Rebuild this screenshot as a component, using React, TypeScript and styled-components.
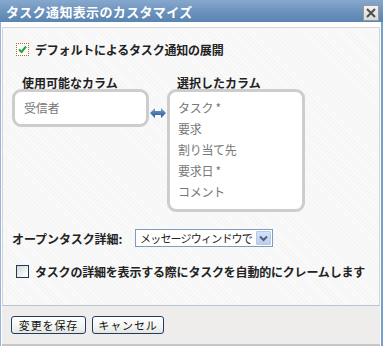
import React from 'react';
import styled, { createGlobalStyle } from 'styled-components';

const GlobalStyle = createGlobalStyle`
    html, body {
        margin: 0;
        padding: 0;
        background: #ffffff;
    }
    body {
        font-family: "Noto Sans CJK JP", "Liberation Sans", sans-serif;
        font-size: 12px;
        color: #222;
    }
`;

const Window = styled.div`
    width: 383px;
    height: 346px;
    display: flex;
    flex-direction: column;
    background: #ffffff;
    overflow: hidden;
`;

const TitleBar = styled.div`
    height: 22px;
    flex: none;
    display: flex;
    align-items: center;
    justify-content: space-between;
    padding: 2px 4px 0 6px;
    box-sizing: border-box;
    background: linear-gradient(#87a8cd, #6990bb 60%, #5b84b1);
`;

const Title = styled.span`
    color: #ffffff;
    font-size: 13px;
    font-weight: bold;
    letter-spacing: 0.35px;
    line-height: 16px;
`;

const CloseButton = styled.span`
    width: 16px;
    height: 16px;
    margin-top: 1px;
    box-sizing: border-box;
    border: 1px solid #9a9a9a;
    background: linear-gradient(#f2f2f2, #d9d9d9);
    display: flex;
    align-items: center;
    justify-content: center;
`;

const Body = styled.div`
    flex: 1;
    display: flex;
    flex-direction: column;
    border-left: 1px solid #93b5da;
    border-right: 2px solid #74a0cd;
    padding: 5px 1px 0 1px;
`;

const Panel = styled.div`
    flex: 1;
    background-color: #f6f6f6;
    background-image: repeating-linear-gradient(45deg, rgba(255, 255, 255, 0.6) 0 1px, transparent 1px 3px);
    border: 1px solid #d4d4d4;
    border-bottom-color: #b7c3cf;
    padding: 15px 0 0 9px;
    display: flex;
    flex-direction: column;
`;

const CheckRow = styled.div<{ $top: number }>`
    display: flex;
    align-items: center;
    margin-top: ${(p) => p.$top}px;
    padding-left: 4px;
    gap: 6px;
    font-weight: bold;
    line-height: 13px;
    letter-spacing: -0.2px;
`;

const CheckBox = styled.span<{ $focused?: boolean }>`
    width: 13px;
    height: 13px;
    flex: none;
    box-sizing: border-box;
    display: flex;
    align-items: center;
    justify-content: center;
    border: ${(p) => (p.$focused ? '1px dotted #b5652a' : '1px solid #1f3b5b')};
    background: ${(p) => (p.$focused ? '#ffffff' : 'linear-gradient(135deg, #d6d6d6, #f6f6f6 70%, #ffffff)')};
`;

const Columns = styled.div`
    display: flex;
    margin-top: 20px;
`;

const Column = styled.div<{ $width: number }>`
    width: ${(p) => p.$width}px;
    display: flex;
    flex-direction: column;
`;

const ColumnLabel = styled.div`
    font-weight: bold;
    line-height: 13px;
    padding-left: 10px;
`;

const ListBox = styled.div<{ $height: number; $indent: number }>`
    height: ${(p) => p.$height}px;
    box-sizing: border-box;
    background: #ffffff;
    border: 3px solid #cdcdcd;
    border-radius: 9px;
    padding: 5px 8px 0 ${(p) => p.$indent}px;
`;

const ListItem = styled.div`
    color: #777777;
    line-height: 21px;
    letter-spacing: -0.3px;
`;

const ArrowSlot = styled.div`
    width: 18px;
    display: flex;
    justify-content: center;
    padding-top: 32px;
`;

const FieldRow = styled.div`
    display: flex;
    align-items: center;
    margin-top: 17px;
`;

const FieldLabel = styled.span`
    width: 123px;
    font-weight: bold;
    line-height: 13px;
    letter-spacing: -0.1px;
`;

const Select = styled.div`
    width: 138px;
    height: 18px;
    box-sizing: border-box;
    border: 1px solid #7f9db9;
    background: #ffffff;
    display: flex;
    align-items: center;
    padding: 0 1px 0 4px;
`;

const SelectText = styled.span`
    flex: 1;
    white-space: nowrap;
    font-size: 11px;
    letter-spacing: -0.8px;
    color: #222;
`;

const DropButton = styled.span`
    width: 15px;
    height: 14px;
    flex: none;
    box-sizing: border-box;
    border: 1px solid #b7c8e8;
    border-radius: 1px;
    background: linear-gradient(#d5e1f6, #bccded);
    display: flex;
    align-items: center;
    justify-content: center;
`;

const Footer = styled.div`
    height: 40px;
    flex: none;
    box-sizing: border-box;
    background: #eeedeb;
    border-bottom: 2px solid #c6c6c6;
    display: flex;
    align-items: flex-start;
    gap: 6px;
    padding: 10px 0 0 9px;
`;

const Button = styled.button<{ $width: number }>`
    width: ${(p) => p.$width}px;
    height: 18px;
    padding: 0;
    font-family: inherit;
    font-size: 11px;
    letter-spacing: 0.9px;
    color: #111;
    border: 1px solid #1e3d66;
    border-radius: 3px;
    background: linear-gradient(#ffffff, #f4f4f2 60%, #e4e4e0);
    line-height: 16px;
`;

const Arrow = () => (
    <svg width="16" height="10" viewBox="0 0 16 10">
        <defs>
            <linearGradient id="arr" x1="0" y1="0" x2="0" y2="1">
                <stop offset="0" stopColor="#7aa6d6" />
                <stop offset="1" stopColor="#22528d" />
            </linearGradient>
        </defs>
        <path d="M0 5 L5 0 L5 3 L11 3 L11 0 L16 5 L11 10 L11 7 L5 7 L5 10 Z" fill="url(#arr)" />
    </svg>
);

const Check = () => (
    <svg width="9" height="9" viewBox="0 0 9 9">
        <path d="M1 4.5 L3.5 7 L8 1.5" stroke="#21a336" strokeWidth="2" fill="none" />
    </svg>
);

const selected = ['タスク *', '要求', '割り当て先', '要求日 *', 'コメント'];

const App = () => {
    return (
        <Window>
            <GlobalStyle />
            <TitleBar>
                <Title>タスク通知表示のカスタマイズ</Title>
                <CloseButton>
                    <svg width="10" height="10" viewBox="0 0 10 10">
                        <path d="M1 1 L9 9 M9 1 L1 9" stroke="#4e4e4e" strokeWidth="2" />
                    </svg>
                </CloseButton>
            </TitleBar>
            <Body>
                <Panel>
                    <CheckRow $top={0}>
                        <CheckBox $focused>
                            <Check />
                        </CheckBox>
                        デフォルトによるタスク通知の展開
                    </CheckRow>
                    <Columns>
                        <Column $width={137}>
                            <ColumnLabel>使用可能なカラム</ColumnLabel>
                            <ListBox $height={38} $indent={9}>
                                <ListItem>受信者</ListItem>
                            </ListBox>
                        </Column>
                        <ArrowSlot>
                            <Arrow />
                        </ArrowSlot>
                        <Column $width={138}>
                            <ColumnLabel>選択したカラム</ColumnLabel>
                            <ListBox $height={123} $indent={8}>
                                {selected.map((s) => (
                                    <ListItem key={s}>{s}</ListItem>
                                ))}
                            </ListBox>
                        </Column>
                    </Columns>
                    <FieldRow>
                        <FieldLabel>オープンタスク詳細:</FieldLabel>
                        <Select>
                            <SelectText>メッセージウィンドウで</SelectText>
                            <DropButton>
                                <svg width="9" height="7" viewBox="0 0 9 7">
                                    <path d="M1 1.5 L4.5 5 L8 1.5" stroke="#4b5f86" strokeWidth="2" fill="none" />
                                </svg>
                            </DropButton>
                        </Select>
                    </FieldRow>
                    <CheckRow $top={18}>
                        <CheckBox />
                        タスクの詳細を表示する際にタスクを自動的にクレームします
                    </CheckRow>
                </Panel>
                <Footer>
                    <Button $width={75}>変更を保存</Button>
                    <Button $width={72}>キャンセル</Button>
                </Footer>
            </Body>
        </Window>
    );
};

export default App;
